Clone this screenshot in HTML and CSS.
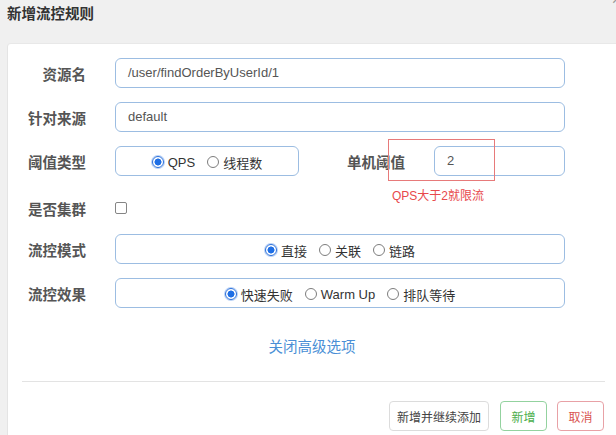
FILE: index.html
```html
<!DOCTYPE html>
<html lang="zh-CN">
<head>
<meta charset="utf-8">
<title>新增流控规则</title>
<link rel="stylesheet" href="styles.css">
</head>
<body>
<div class="header">
  <h1 class="title">新增流控规则</h1>
  <span class="close">×</span>
</div>
<div class="panel">
  <div class="form">
    <div class="row">
      <label class="label">资源名</label>
      <div class="input">/user/findOrderByUserId/1</div>
    </div>
    <div class="row">
      <label class="label">针对来源</label>
      <div class="input">default</div>
    </div>
    <div class="row">
      <label class="label">阈值类型</label>
      <div class="radios radios-short">
        <span class="opt"><span class="radio checked"></span>QPS</span>
        <span class="opt"><span class="radio"></span>线程数</span>
      </div>
      <label class="label label-mid">单机阈值</label>
      <div class="input input-short">2</div>
      <div class="note-box"></div>
      <div class="note-text">QPS大于2就限流</div>
    </div>
    <div class="row row-check">
      <label class="label">是否集群</label>
      <span class="checkbox"></span>
    </div>
    <div class="row">
      <label class="label">流控模式</label>
      <div class="radios">
        <span class="opt"><span class="radio checked"></span>直接</span>
        <span class="opt"><span class="radio"></span>关联</span>
        <span class="opt"><span class="radio"></span>链路</span>
      </div>
    </div>
    <div class="row">
      <label class="label">流控效果</label>
      <div class="radios">
        <span class="opt"><span class="radio checked"></span>快速失败</span>
        <span class="opt"><span class="radio"></span>Warm Up</span>
        <span class="opt"><span class="radio"></span>排队等待</span>
      </div>
    </div>
  </div>
  <div class="advanced"><a class="link">关闭高级选项</a></div>
  <div class="separator"></div>
  <div class="footer">
    <button class="btn btn-default">新增并继续添加</button>
    <button class="btn btn-green">新增</button>
    <button class="btn btn-red">取消</button>
  </div>
</div>
</body>
</html>
```
FILE: styles.css
```css
html, body {
  margin: 0;
  padding: 0;
}
body {
  background: #f0f0f0;
  width: 616px;
  height: 435px;
  overflow: hidden;
  font-family: "Liberation Sans", "Noto Sans CJK SC", sans-serif;
  color: #333;
}
.header {
  height: 43px;
  display: flex;
  align-items: flex-start;
  padding-left: 7px;
  box-sizing: border-box;
}
.title {
  margin: 4px 0 0 0;
  font-size: 14.5px;
  line-height: 20px;
  font-weight: bold;
  color: #333;
}
.close {
  margin-left: auto;
  margin-right: -5px;
  margin-top: -8px;
  font-size: 16px;
  line-height: 16px;
  color: #999;
}
.panel {
  margin-left: 7px;
  width: 612px;
  height: 400px;
  box-sizing: border-box;
  background: #fff;
  border-left: 1px solid #e4e4e4;
  border-top: 1px solid #e8e8e8;
  border-top-left-radius: 4px;
  padding: 14px 14px 0 14px;
}
.form {
  display: flex;
  flex-direction: column;
  gap: 14px;
  width: 543px;
}
.row {
  position: relative;
  display: flex;
  align-items: center;
  height: 30px;
}
.row-check {
  padding-top: 6px;
  box-sizing: border-box;
}
.label {
  width: 64px;
  flex: none;
  text-align: right;
  margin-right: 29px;
  font-size: 14.5px;
  font-weight: bold;
  color: #555;
  white-space: nowrap;
}
.label-mid {
  width: 106px;
  margin-right: 29px;
}
.input {
  flex: 1;
  height: 30px;
  box-sizing: border-box;
  border: 1px solid #9cbde2;
  border-radius: 6px;
  padding: 0 12px;
  font-size: 13px;
  line-height: 28px;
  color: #555;
}
.input-short {
  flex: none;
  width: 131px;
}
.radios {
  flex: 1;
  height: 30px;
  box-sizing: border-box;
  border: 1px solid #9cbde2;
  border-radius: 6px;
  display: flex;
  align-items: center;
  justify-content: center;
  gap: 12px;
  font-size: 13px;
  color: #333;
  padding-top: 2px;
}
.radios-short {
  flex: none;
  width: 184px;
}
.opt {
  display: flex;
  align-items: center;
  gap: 4px;
  white-space: nowrap;
}
.radio {
  width: 12px;
  height: 12px;
  box-sizing: border-box;
  border: 1px solid #7d7d7d;
  border-radius: 50%;
  background: #fff;
  flex: none;
}
.radio.checked {
  border: 1px solid #2a6fdb;
  box-shadow: 0 0 0 1px #b9d2f6;
  background: radial-gradient(circle, #1f6fe5 0 3.2px, #fff 3.8px);
}
.checkbox {
  width: 12px;
  height: 12px;
  box-sizing: border-box;
  border: 1px solid #858585;
  border-radius: 2px;
  background: #fff;
}
.note-box {
  position: absolute;
  left: 366px;
  top: -7px;
  width: 107px;
  height: 42px;
  box-sizing: border-box;
  border: 1px solid #e77a7a;
}
.note-text {
  position: absolute;
  left: 370px;
  top: 42px;
  font-size: 12px;
  line-height: 16px;
  color: #e8484b;
  white-space: nowrap;
}
.advanced {
  margin-top: 29px;
  text-align: center;
  line-height: 20px;
  padding-right: 3px;
}
.link {
  font-size: 14.5px;
  color: #4a8fd6;
}
.separator {
  margin-top: 24px;
  height: 1px;
  background: #e3e3e3;
}
.footer {
  margin-top: 19px;
  display: flex;
  justify-content: flex-end;
  gap: 10px;
  padding-right: 1px;
}
.btn {
  height: 30px;
  box-sizing: border-box;
  border-radius: 4px;
  background: #fff;
  font-family: "Liberation Sans", "Noto Sans CJK SC", sans-serif;
  font-size: 12px;
  padding: 0 7px;
  min-width: 47px;
}
.btn-default {
  border: 1px solid #dcdcdc;
  color: #444;
  margin-right: 1px;
}
.btn-green {
  border: 1px solid #93d29f;
  color: #4cae4c;
}
.btn-red {
  border: 1px solid #e8a1a6;
  color: #d9534f;
}
```
